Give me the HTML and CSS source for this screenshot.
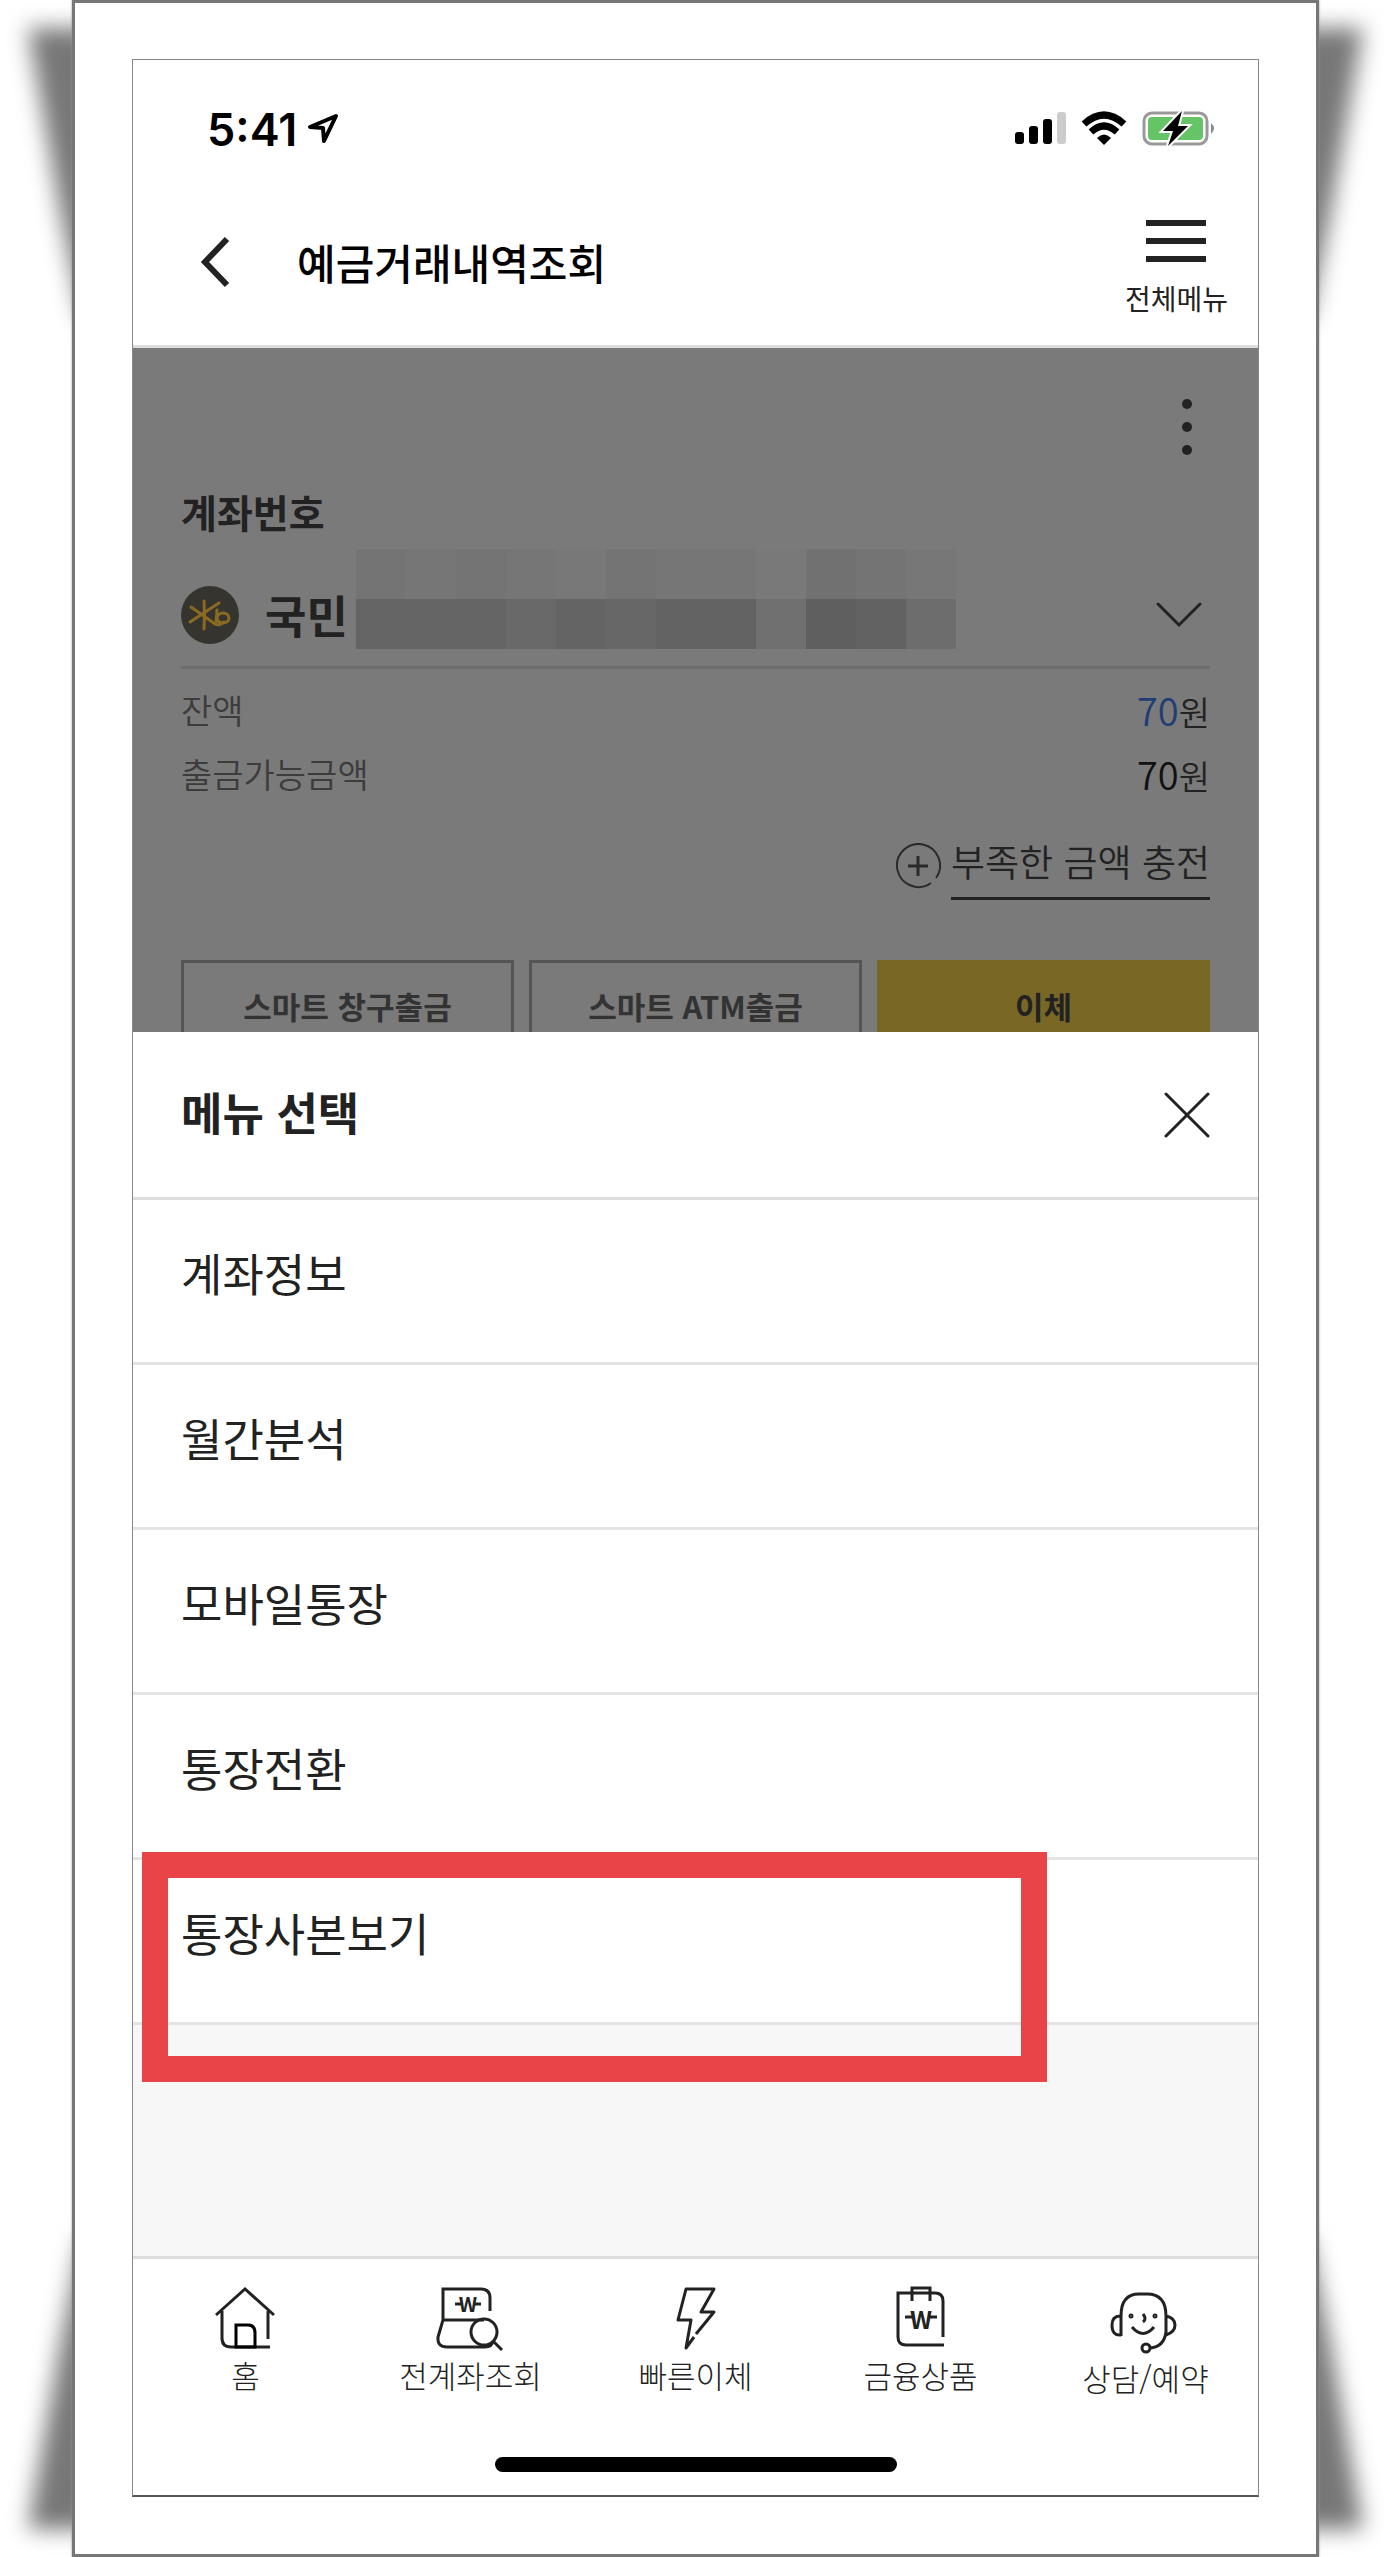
FILE: index.html
```html
<!DOCTYPE html>
<html lang="ko">
<head>
    <meta charset="UTF-8">
    <meta name="viewport" content="width=device-width, initial-scale=1.0">
    <title>예금거래내역조회</title>
    <link rel="stylesheet" href="styles.css">
</head>
<body>
    <!-- Curled paper shadows -->
    <div class="shadow shadow-tl"><span></span></div>
    <div class="shadow shadow-tr"><span></span></div>
    <div class="shadow shadow-bl"><span></span></div>
    <div class="shadow shadow-br"><span></span></div>

    <div class="frame">
        <div class="phone">
            <div class="status-bar">
                <span class="clock">5:41</span>
                <svg class="location" width="32" height="32" viewBox="0 0 32 32">
                    <path d="M29 3 L3 14 L16 15 L17 28 Z" fill="none" stroke="#000" stroke-width="4" stroke-linejoin="round"/>
                </svg>
                <svg class="status-icons" width="200" height="36" viewBox="0 0 200 36">
                    <rect x="0" y="21" width="9" height="12" rx="3"/>
                    <rect x="14" y="15" width="9" height="18" rx="3"/>
                    <rect x="28" y="8" width="9" height="25" rx="3"/>
                    <rect x="42" y="1" width="9" height="32" rx="3" fill="#ccc"/>
                    <path d="M69 13 Q89 -5 109 13" fill="none" stroke="#000" stroke-width="7"/>
                    <path d="M76 21 Q89 9 102 21" fill="none" stroke="#000" stroke-width="7"/>
                    <path d="M82 27 Q89 20 96 27 L89 34 Z"/>
                    <rect x="129" y="2" width="63" height="31" rx="8" fill="none" stroke="#999" stroke-width="3"/>
                    <rect x="133" y="6" width="55" height="23" rx="4" fill="#65c466"/>
                    <path d="M196 12 Q202 17 196 23 Z" fill="#888"/>
                    <path d="M167 0 L148 20 H158 L153 35 L173 15 H163 Z" stroke="#fff" stroke-width="4" paint-order="stroke"/>
                </svg>
            </div>

            <header class="top-bar">
                <button class="back" aria-label="뒤로">
                    <svg width="32" height="52" viewBox="0 0 32 52">
                        <path d="M28 3 L6 26 L28 49" fill="none" stroke="#222" stroke-width="6"/>
                    </svg>
                </button>
                <h1>예금거래내역조회</h1>
                <button class="all-menu">
                    <svg width="60" height="42" viewBox="0 0 60 42">
                        <path d="M0 3 H60 M0 21 H60 M0 39 H60" stroke="#222" stroke-width="6"/>
                    </svg>
                    <span>전체메뉴</span>
                </button>
            </header>

            <!-- Dimmed account page behind the sheet -->
            <section class="account">
                <button class="more" aria-label="더보기">
                    <svg width="10" height="56" viewBox="0 0 10 56" fill="#222">
                        <circle cx="5" cy="5" r="5"/>
                        <circle cx="5" cy="28" r="5"/>
                        <circle cx="5" cy="51" r="5"/>
                    </svg>
                </button>
                <h2>계좌번호</h2>
                <div class="account-row">
                    <svg class="bank-logo" width="58" height="58" viewBox="0 0 58 58">
                        <circle cx="29" cy="29" r="29" fill="#35342e"/>
                        <g fill="none" stroke="#8a6a22" stroke-width="3" stroke-linecap="round">
                            <path d="M23 15 Q24 28 23 43 M10 21 L34 38 Q38 40 43 36 M38 17 L9 36 M36 24 L35 36"/>
                            <ellipse cx="42" cy="32" rx="6" ry="5"/>
                        </g>
                    </svg>
                    <strong>국민</strong>
                    <div class="mosaic">
                        <div class="mosaic-top"></div>
                        <div class="mosaic-bottom"></div>
                    </div>
                    <button class="expand" aria-label="계좌 선택">
                        <svg width="46" height="26" viewBox="0 0 46 26">
                            <path d="M2 2 L23 23 L44 2" fill="none" stroke="#222" stroke-width="3" stroke-linecap="round"/>
                        </svg>
                    </button>
                </div>
                <dl class="amounts">
                    <div>
                        <dt>잔액</dt>
                        <dd><span class="blue">70</span>원</dd>
                    </div>
                    <div>
                        <dt>출금가능금액</dt>
                        <dd><span>70</span>원</dd>
                    </div>
                </dl>
                <a class="charge" href="#">
                    <svg width="46" height="46" viewBox="0 0 46 46" fill="none" stroke="#2a2a2a">
                        <path d="M36 40 A21.500 21.500 0 1 1 41 35" stroke-width="2"/>
                        <path d="M13 23 H33 M23 13 V33" stroke-width="3"/>
                    </svg>
                    <span>부족한 금액 충전</span>
                </a>
                <div class="actions">
                    <button>스마트 창구출금</button>
                    <button>스마트 ATM출금</button>
                    <button class="primary">이체</button>
                </div>
            </section>

            <section class="sheet">
                <div class="sheet-head">
                    <h2>메뉴 선택</h2>
                    <button aria-label="닫기">
                        <svg width="46" height="46" viewBox="0 0 46 46">
                            <path d="M2 2 L44 44 M44 2 L2 44" stroke="#222" stroke-width="3" stroke-linecap="round"/>
                        </svg>
                    </button>
                </div>
                <ul>
                    <li><a href="#">계좌정보</a></li>
                    <li><a href="#">월간분석</a></li>
                    <li><a href="#">모바일통장</a></li>
                    <li><a href="#">통장전환</a></li>
                    <li class="marked"><a href="#">통장사본보기</a></li>
                </ul>
            </section>

            <nav class="tabs">
                <a href="#">
                    <svg width="64" height="68" viewBox="1 0 64 68">
                        <path d="M3 32 L32 6 L61 32 M9 28 V55 Q9 64 18 64 H57 M55 28 V56"/>
                        <path d="M23 64 V42 H35 Q42 42 42 50 V64 Z" stroke="#000"/>
                    </svg>
                    <span>홈</span>
                </a>
                <a href="#">
                    <svg width="70" height="68" viewBox="3 0 70 68">
                        <path d="M10 37 V6 H48 Q57 6 57 15 V28 M10 37 H51 M10 37 L5 54 Q4 64 14 64 H52 Q59 64 60 58"/>
                        <circle cx="51" cy="49" r="13"/>
                        <path d="M60 58 L69 67"/>
                        <path d="M22 21 H28 M42 21 H48"/>
                        <text x="35" y="29" font-size="20">W</text>
                    </svg>
                    <span>전계좌조회</span>
                </a>
                <a href="#">
                    <svg width="64" height="68" viewBox="2 0 64 68">
                        <path d="M32 54 L24 65 L29 37 H16 L24 6 H52 L39 29 H52 L34 51" stroke-linejoin="round"/>
                    </svg>
                    <span>빠른이체</span>
                </a>
                <a href="#">
                    <svg width="64" height="68" viewBox="0 0 64 68">
                        <path d="M55 62 H17 Q9 62 9 54 V10 H46 Q54 10 54 18 V54 M23 18 V5 H41 V18"/>
                        <path d="M16 34 H23 M41 34 H48"/>
                        <text x="32" y="46" font-size="24">W</text>
                    </svg>
                    <span>금융상품</span>
                </a>
                <a class="help" href="#">
                    <svg width="68" height="68" viewBox="5 0 68 68">
                        <path d="M14 50 V30 Q14 8 32 8 H40 Q59 8 59 30 V46 Q57 61 43 62 M13 30 Q5 30 5 39 Q5 50 14 49 M59 30 Q68 32 68 39 Q68 46 59 49"/>
                        <path d="M25 41 Q36 54 47 41 M36 28 Q40 33 36 36"/>
                        <circle cx="39" cy="62" r="4"/>
                        <circle cx="24" cy="30" r="1"/>
                        <circle cx="48" cy="30" r="1"/>
                    </svg>
                    <span>상담/예약</span>
                </a>
            </nav>
            <div class="home-indicator"></div>
        </div>
    </div>
</body>
</html>
```
FILE: styles.css
```css
* {
    box-sizing: border-box;
}
body {
    margin: 0;
    position: relative;
    min-height: 100vh;
    display: flex;
    background: #fff;
    color: #222;
    font-family: "Noto Sans CJK KR", sans-serif;
    overflow-x: hidden;
}
h1, h2, ul, dl, dd {
    margin: 0;
    padding: 0;
}
ul {
    list-style: none;
}
a {
    color: inherit;
    text-decoration: none;
}
button {
    font-family: inherit;
    color: inherit;
    background: none;
    border: none;
    padding: 0;
    cursor: pointer;
}
svg {
    display: block;
    flex: none;
}

/* Paper frame */
.frame {
    position: relative;
    flex: 1;
    display: flex;
    margin: 0 72px;
    padding: 56px 57px 57px;
    background: #fff;
    border: 3px solid #777;
    box-shadow: 0 0 2px #999;
}
.phone {
    flex: 1;
    min-width: 0;
    display: flex;
    flex-direction: column;
    border: 1px solid #888;
    border-bottom: 2px solid #555;
}
.shadow {
    position: absolute;
    width: 120px;
    height: 360px;
    filter: blur(11px);
}
.shadow span {
    display: block;
    height: 100%;
    background: #777;
    clip-path: polygon(28px 28px, 120px 28px, 120px 320px, 82px 320px, 60px 210px, 46px 130px);
}
.shadow-tl { top: 0; left: 0; }
.shadow-tr { top: 0; right: 0; transform: scaleX(-1); }
.shadow-bl { bottom: 0; left: 0; transform: scaleY(-1); }
.shadow-br { bottom: 0; right: 0; transform: scale(-1); }

/* Status bar and header */
.status-bar {
    display: flex;
    align-items: center;
    height: 138px;
    padding: 0 43px 0 74px;
}
.clock {
    font-family: Inter, sans-serif;
    font-size: 45px;
    font-weight: 600;
    color: #000;
}
.location {
    margin-left: 10px;
}
.status-icons {
    margin-left: auto;
}
.top-bar {
    display: flex;
    align-items: center;
    height: 150px;
    padding: 0 30px 20px 66px;
    border-bottom: 3px solid #ddd;
}
.top-bar h1 {
    margin-left: 66px;
    font-size: 42px;
    font-weight: 500;
    line-height: 60px;
    color: #000;
}
.all-menu {
    margin-left: auto;
    padding-top: 14px;
    display: flex;
    flex-direction: column;
    align-items: center;
    gap: 16px;
    font-size: 28px;
    line-height: 40px;
}

/* Dimmed account page */
.account {
    height: 684px;
    padding: 51px 48px 0;
    background: #7a7a7a;
    overflow: hidden;
}
.more {
    display: block;
    margin: 0 18px 0 auto;
}
.account h2 {
    padding: 26px 0 2px;
    font-size: 39px;
    line-height: 60px;
}
.account-row {
    display: flex;
    align-items: center;
    height: 126px;
    padding-top: 20px;
    border-bottom: 3px solid #6d6d6d;
}
.account-row strong {
    margin-left: 26px;
    font-size: 45px;
    line-height: 60px;
}
.mosaic {
    width: 600px;
    margin-left: 8px;
    align-self: flex-end;
    padding-bottom: 17px;
}
.mosaic div {
    height: 50px;
}
.mosaic-top {
    background: linear-gradient(to right, #747474 0 50px, #767676 50px 100px, #747474 100px 150px, #767676 150px 200px, #787878 200px 250px, #747474 250px 300px, #767676 300px 400px, #797979 400px 450px, #717171 450px 500px, #747474 500px 550px, #777 550px);
}
.mosaic-bottom {
    background: linear-gradient(to right, #656565 0 150px, #696969 150px 200px, #646464 200px 250px, #676767 250px 300px, #636363 300px 400px, #707070 400px 450px, #5f5f5f 450px 500px, #626262 500px 550px, #6d6d6d 550px);
}
.expand {
    margin: 0 8px 0 auto;
}
.amounts {
    padding-top: 8px;
}
.amounts div {
    display: flex;
    justify-content: space-between;
    align-items: center;
    height: 64px;
}
.amounts dt {
    font-size: 34px;
    font-weight: 350;
    color: #3c3c3c;
}
.amounts dd {
    font-size: 34px;
    font-weight: 350;
}
.amounts dd span {
    font-size: 38px;
    color: #111;
}
.amounts dd .blue {
    color: #213d76;
}
.charge {
    display: flex;
    justify-content: flex-end;
    align-items: center;
    gap: 10px;
    margin-top: 26px;
    font-size: 37px;
    font-weight: 350;
}
.charge span {
    line-height: 60px;
    padding-bottom: 6px;
    border-bottom: 3px solid #222;
}
.actions {
    display: grid;
    grid-template-columns: repeat(3, 1fr);
    gap: 15px;
    margin-top: 60px;
}
.actions button {
    height: 90px;
    border: 3px solid #555;
    font-size: 31px;
    font-weight: 700;
    color: #333;
}
.actions .primary {
    background: #796726;
    border-color: #796726;
    color: #222;
}

/* Bottom sheet */
.sheet {
    position: relative;
    flex: 1;
    background: #f7f7f7;
}
.sheet-head {
    display: flex;
    justify-content: space-between;
    align-items: center;
    height: 168px;
    padding: 0 48px;
    background: #fff;
    border-bottom: 3px solid #ddd;
}
.sheet-head h2 {
    padding-bottom: 6px;
    font-size: 45px;
}
.sheet li {
    position: relative;
    background: #fff;
    border-bottom: 3px solid #e3e3e3;
}
.sheet li a {
    display: block;
    padding: 40px 48px 56px;
    font-size: 45px;
    line-height: 66px;
}
.marked::after {
    content: "";
    position: absolute;
    top: -8px;
    bottom: -60px;
    left: 9px;
    right: 211px;
    border: 26px solid #e94549;
    pointer-events: none;
}

/* Bottom tabs */
.tabs {
    display: grid;
    grid-template-columns: repeat(5, 1fr);
    height: 201px;
    padding-top: 24px;
    border-top: 3px solid #ddd;
}
.tabs a {
    display: flex;
    flex-direction: column;
    align-items: center;
    font-size: 31px;
    font-weight: 300;
    line-height: 48px;
}
.tabs svg {
    fill: none;
    stroke: #222;
    stroke-width: 3px;
    overflow: visible;
}
.tabs text {
    fill: #222;
    stroke: none;
    font-weight: 700;
    text-anchor: middle;
}
.tabs .help {
    padding-top: 3px;
}
.home-indicator {
    width: 402px;
    height: 15px;
    margin: 0 auto 23px;
    border-radius: 8px;
    background: #000;
}
```
